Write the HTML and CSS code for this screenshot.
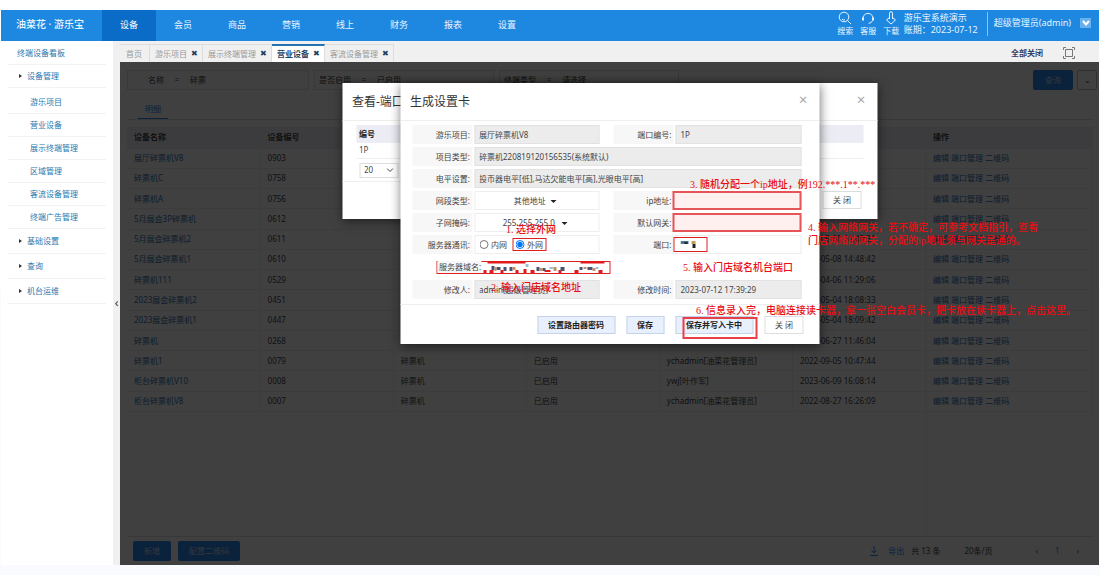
FILE: index.html
```html
<!DOCTYPE html>
<html lang="zh-CN">
<head>
<meta charset="utf-8">
<title>油菜花 · 游乐宝</title>
<link rel="stylesheet" href="styles.css">
</head>
<body>
<header class="topbar">
  <div class="logo">油菜花 · 游乐宝</div>
  <nav class="nav">
    <a class="nav-item active" href="#">设备</a><a class="nav-item" href="#">会员</a><a class="nav-item" href="#">商品</a><a class="nav-item" href="#">营销</a><a class="nav-item" href="#">线上</a><a class="nav-item" href="#">财务</a><a class="nav-item" href="#">报表</a><a class="nav-item" href="#">设置</a>
  </nav>
  <div class="tools">
    <a class="tool" href="#"><svg width="14" height="14" viewBox="0 0 14 14"><circle cx="6" cy="6" r="4.8"/><path d="M9.5 9.5l3.500 3.500M4 8.200a3 3 0 0 0 3 .6"/></svg>搜索</a>
    <a class="tool" href="#"><svg width="14" height="14" viewBox="0 0 14 14"><path d="M2 9a5.200 5.200 0 1 1 10 0M11.500 9.500q-1 3-4 2.800"/><path stroke-width="2" d="M2 6.500v3M12 6.500v3"/></svg>客服</a>
    <a class="tool" href="#"><svg width="14" height="14" viewBox="0 0 14 14"><path d="M5.500 8V2.200a1.500 1.500 0 0 1 3 0V8M5.500 6.500L2.500 9 7 13l4.500-4-3-2.500"/></svg>下载</a>
  </div>
  <div class="account"><span>游乐宝系统演示</span><span>账期：2023-07-12</span></div>
  <div class="user">超级管理员(admin)</div>
  <button class="user-menu" aria-label="用户菜单"><svg width="8" height="6" viewBox="0 0 8 6"><path d="M1 1l3 3.500L7 1"/></svg></button>
</header>
<div class="body">
  <aside class="sidebar">
    <a class="side-item top" href="#">终端设备看板</a>
    <a class="side-item parent" href="#">设备管理</a>
    <div class="side-sub">
      <a class="side-item" href="#">游乐项目</a>
      <a class="side-item" href="#">营业设备</a>
      <a class="side-item" href="#">展示终端管理</a>
      <a class="side-item" href="#">区域管理</a>
      <a class="side-item" href="#">客流设备管理</a>
      <a class="side-item" href="#">终端广告管理</a>
    </div>
    <a class="side-item parent group" href="#">基础设置</a>
    <a class="side-item parent group" href="#">查询</a>
    <a class="side-item parent group" href="#">机台运维</a>
  </aside>
  <button class="splitter" aria-label="收起侧栏">‹</button>
  <main class="main">
    <div class="tabs">
      <a class="tab" href="#">首页</a>
      <a class="tab" href="#">游乐项目<b>✖</b></a>
      <a class="tab" href="#">展示终端管理<b>✖</b></a>
      <a class="tab current" href="#">营业设备<b>✖</b></a>
      <a class="tab" href="#">客流设备管理<b>✖</b></a>
      <a class="close-all" href="#">全部关闭</a>
      <button class="full" aria-label="全屏"><svg width="12" height="12" viewBox="0 0 12 12"><path d="M2.500 2.500h7v7h-7zM.5 3V.5H3M9 .5h2.500V3M.5 9v2.500H3M9 11.500h2.500V9"/></svg></button>
    </div>
    <div class="content">
      <div class="filters">
        <div class="filter wide"><label for="f1">名称</label><i>=</i><input id="f1" value="碎票"></div>
        <div class="filter"><label for="f2">是否启用</label><i>=</i><select id="f2"><option>已启用</option></select></div>
        <div class="filter"><label for="f3">终端类型</label><i>=</i><select id="f3"><option>请选择</option></select></div>
        <button class="primary search">查询</button>
        <button class="more" aria-label="更多条件">⌄</button>
      </div>
      <div class="subtabs"><a href="#">明细</a></div>
      <div class="grid-area">
        <table class="devices">
          <thead><tr><th>设备名称</th><th>设备编号</th><th>设备类型</th><th>状态</th><th>修改人</th><th>修改时间</th><th class="ops">操作</th></tr></thead>
          <tbody>
            <tr><td><a href="#">展厅碎票机V8</a></td><td>0903</td><td></td><td></td><td></td><td></td><td><a href="#">编辑</a> <a href="#">端口管理</a> <a href="#">二维码</a></td></tr>
            <tr><td><a href="#">碎票机C</a></td><td>0758</td><td></td><td></td><td></td><td></td><td><a href="#">编辑</a> <a href="#">端口管理</a> <a href="#">二维码</a></td></tr>
            <tr><td><a href="#">碎票机A</a></td><td>0756</td><td></td><td></td><td></td><td></td><td><a href="#">编辑</a> <a href="#">端口管理</a> <a href="#">二维码</a></td></tr>
            <tr><td><a href="#">5月展会3P碎票机</a></td><td>0612</td><td></td><td></td><td></td><td></td><td><a href="#">编辑</a> <a href="#">端口管理</a> <a href="#">二维码</a></td></tr>
            <tr><td><a href="#">5月展会碎票机2</a></td><td>0611</td><td></td><td></td><td></td><td>2023-05-08 14:49:31</td><td><a href="#">编辑</a> <a href="#">端口管理</a> <a href="#">二维码</a></td></tr>
            <tr><td><a href="#">5月展会碎票机1</a></td><td>0610</td><td></td><td></td><td></td><td>2023-05-08 14:48:42</td><td><a href="#">编辑</a> <a href="#">端口管理</a> <a href="#">二维码</a></td></tr>
            <tr><td><a href="#">碎票机111</a></td><td>0529</td><td></td><td></td><td></td><td>2023-04-06 11:29:06</td><td><a href="#">编辑</a> <a href="#">端口管理</a> <a href="#">二维码</a></td></tr>
            <tr><td><a href="#">2023展会碎票机2</a></td><td>0451</td><td></td><td></td><td></td><td>2023-05-04 18:08:33</td><td><a href="#">编辑</a> <a href="#">端口管理</a> <a href="#">二维码</a></td></tr>
            <tr><td><a href="#">2023展会碎票机1</a></td><td>0447</td><td></td><td></td><td></td><td>2023-05-04 18:09:42</td><td><a href="#">编辑</a> <a href="#">端口管理</a> <a href="#">二维码</a></td></tr>
            <tr><td><a href="#">碎票机</a></td><td>0268</td><td></td><td></td><td></td><td>2022-06-27 11:46:04</td><td><a href="#">编辑</a> <a href="#">端口管理</a> <a href="#">二维码</a></td></tr>
            <tr><td><a href="#">碎票机1</a></td><td>0079</td><td>碎票机</td><td>已启用</td><td>ychadmin[油菜花管理员]</td><td>2022-09-05 10:47:44</td><td><a href="#">编辑</a> <a href="#">端口管理</a> <a href="#">二维码</a></td></tr>
            <tr><td><a href="#">柜台碎票机V10</a></td><td>0008</td><td>碎票机</td><td>已启用</td><td>ywj[叶作军]</td><td>2023-06-09 16:08:14</td><td><a href="#">编辑</a> <a href="#">端口管理</a> <a href="#">二维码</a></td></tr>
            <tr><td><a href="#">柜台碎票机V8</a></td><td>0007</td><td>碎票机</td><td>已启用</td><td>ychadmin[油菜花管理员]</td><td>2022-08-27 16:26:09</td><td><a href="#">编辑</a> <a href="#">端口管理</a> <a href="#">二维码</a></td></tr>
          </tbody>
        </table>
        <div class="ops-fill"></div>
      </div>
      <div class="footer">
        <button class="primary">新增</button>
        <button class="primary">配置二维码</button>
        <a class="export" href="#"><svg width="8" height="10" viewBox="0 0 8 10"><path d="M4 0v7M1.500 4.500L4 7l2.500-2.500M0 9.500h8"/></svg>导出</a>
        <span>共 13 条</span>
        <select class="page-size" aria-label="每页条数"><option>20条/页</option></select>
        <div class="pager"><a href="#">‹</a><a href="#" class="on">1</a><a href="#">›</a></div>
      </div>
      <div class="mask"></div>

      <section class="dialog ports">
        <div class="dialog-head"><h2>查看-端口</h2><button class="x" aria-label="关闭">×</button></div>
        <div class="ports-body">
          <table class="ports-table"><thead><tr><th>编号</th></tr></thead><tbody><tr><td>1P</td></tr></tbody></table>
          <div class="ports-page"><select aria-label="每页"><option>20</option></select><svg width="7" height="5" viewBox="0 0 7 5"><path d="M.5 .5l3 3 3-3"/></svg></div>
        </div>
        <div class="dialog-foot"><button class="plain">关 闭</button></div>
      </section>

      <section class="dialog card">
        <div class="dialog-head"><h2>生成设置卡</h2><button class="x" aria-label="关闭">×</button></div>
        <form class="form">
          <div class="field"><label for="c1">游乐项目:</label><input id="c1" readonly value="展厅碎票机V8"></div>
          <div class="field"><label for="c2">端口编号:</label><input id="c2" readonly value="1P"></div>
          <div class="field full-row"><label for="c3">项目类型:</label><input id="c3" readonly value="碎票机220819120156535(系统默认)"></div>
          <div class="field full-row"><label for="c4">电平设置:</label><input id="c4" readonly value="投币器电平[低],马达欠能电平[高],光眼电平[高]"></div>
          <div class="field"><label for="c5">网段类型:</label><span class="pick"><select id="c5"><option>其他地址</option></select></span></div>
          <div class="field"><label for="c6">ip地址:</label><input id="c6" class="marked"></div>
          <div class="field"><label for="c7">子网掩码:</label><span class="pick mask-pick"><select id="c7"><option>255.255.255.0</option></select></span></div>
          <div class="field"><label for="c8">默认网关:</label><input id="c8" class="marked"></div>
          <div class="field"><span class="label">服务器通讯:</span><div class="radios"><label><input type="radio" name="net">内网</label><label class="boxed"><input type="radio" name="net" checked>外网</label></div></div>
          <div class="field"><label for="c9">端口:</label><div class="port-cell"><div class="port-box"><input id="c9"><svg width="18" height="8" viewBox="0 0 18 8"><path fill="#487896" d="M0 1h8v3H0z"/><path fill="#222" d="M4 2h3v2H4zM12 4h3v4h-3z"/><path fill="#c49c55" d="M11 1h4v3h-4z"/></svg></div></div></div>
          <div class="domain full-row"><div class="domain-box"><label for="c10">服务器域名:</label><input id="c10"><svg viewBox="0 0 130 12" width="130" height="12"><path d="M5 1h38M10 0h28M98 1h24" stroke="#e31a1c" stroke-width="3"/><g fill="#e31a1c"><path d="M1 9h3v3H1zM7 9h4v3H7zM18 9h3v3h-3zM33 9h3v3h-3zM41 8h3v4h-3zM48 9h4v3h-4zM62 9h6v2h-6zM76 9h3v3h-3zM92 9h4v3h-4zM116 9h4v3h-4z"/></g><g fill="#47536f"><path d="M9 5h3v4H9zM14 6h4v3h-4zM21 6h3v4h-3zM27 6h3v4h-3zM54 6h3v4h-3zM60 7h3v3h-3zM78 6h4v4h-4zM97 6h3v3h-3zM105 6h5v3h-5z"/></g><g fill="#c59169"><path d="M12 6h2v4h-2zM30 6h3v3h-3zM57 7h3v3h-3zM71 6h3v4h-3zM101 6h3v2h-3zM110 7h3v3h-3z"/></g><path fill="#a0bfd0" d="M43 3h3v3h-3zM67 6h4v2h-4zM113 6h3v2h-3z"/></svg></div></div>
          <div class="field"><label for="c11">修改人:</label><input id="c11" readonly value="admin[超级管理员]"></div>
          <div class="field"><label for="c12">修改时间:</label><input id="c12" readonly value="2023-07-12 17:39:29"></div>
        </form>
        <div class="dialog-foot">
          <button class="soft">设置路由器密码</button><button class="soft">保存</button><button class="soft write"><span>保存并写入卡中</span></button><button class="plain">关 闭</button>
        </div>
        <p class="note n1">1. 选择外网</p>
        <p class="note n2">2. 输入门店域名地址</p>
        <p class="note n3">3. 随机分配一个ip地址，例192.***.1**.***</p>
        <p class="note n4">4. 输入网络网关，若不确定，可参考文档指引，查看<br>门店网络的网关，分配的ip地址须与网关是通的。</p>
        <p class="note n5">5. 输入门店域名机台端口</p>
        <p class="note n6">6. 信息录入完，电脑连接读卡器，拿一张空白会员卡，把卡放在读卡器上，点击这里。</p>
      </section>
    </div>
  </main>
</div>
</body>
</html>
```
FILE: styles.css
```css
* { box-sizing: border-box; }
body {
  margin: 0;
  padding: 10px 1px;
  min-height: 100vh;
  display: flex;
  flex-direction: column;
  overflow-x: hidden;
  background: #fff;
  background-image: linear-gradient(#fff 50%, #fafbfe 50%);
  font: 8px/12px "Noto Sans", "Noto Sans CJK SC", sans-serif;
  color: #444;
}
a { color: inherit; text-decoration: none; }
input, select, button { font: inherit; color: inherit; margin: 0; padding: 0; border: 0; background: none; border-radius: 0; min-width: 0; }
select { appearance: none; }
svg { fill: none; stroke: currentColor; }

.topbar { display: flex; height: 31px; background: #1e88e1; color: #e8f4ff; align-items: center; flex: none; }
.logo { width: 101px; padding: 0 0 3px 15px; font-size: 10px; font-weight: 500; white-space: nowrap; }
.nav { display: flex; flex: 1; height: 100%; font-size: 9px; }
.nav-item { width: 54px; display: flex; align-items: center; justify-content: center; padding-bottom: 2px; }
.nav-item.active { background: #0a6cc6; color: #fff; }
.tools { display: flex; gap: 6px; padding-right: 4px; }
.tool { display: flex; flex-direction: column; align-items: center; width: 17px; white-space: nowrap; margin-top: -4px; }
.account { display: flex; flex-direction: column; font-size: 9px; border-right: 1px solid #8cc4f2; width: 84px; white-space: nowrap; line-height: 12px; margin-top: -3px; }
.user { font-size: 9px; padding: 0 9px 5px 6px; white-space: nowrap; }
.user-menu { width: 11px; height: 10px; margin: 0 8px 5px 0; background: #68b0ee; display: flex; align-items: center; justify-content: center; color: #fff; stroke-width: 2; }

.body { display: flex; flex: 1; }
.sidebar { width: 112px; flex: none; padding: 1px 7px 0 6px; background: #fff; color: #2878b0; }
.side-item { display: flex; align-items: center; height: 23px; padding-left: 23px; border-bottom: 1px solid #f3f3f3; }
.side-item.top { padding-left: 10px; }
.side-item.parent { padding-left: 12px; gap: 5px; }
.side-item.parent::before { content: ""; border: solid transparent; border-width: 2px 0 2px 3px; border-left-color: #333; }
.side-sub { padding-top: 3px; }
.side-item.group { height: 25px; }
.splitter { width: 7px; flex: none; background: #f0f0f0; color: #333; font-size: 12px; }
.main { flex: 1; display: flex; flex-direction: column; min-width: 0; background: #f0f0f0; }

.tabs { display: flex; height: 21px; padding-top: 3px; color: #999; }
.tab { display: flex; align-items: center; gap: 4px; padding: 0 5px; border: 1px solid #ddd; border-width: 1px 1px 0 0; white-space: nowrap; }
.tab:first-child { padding: 0 7px 0 6px; }
.tab b { width: 6px; color: #1d3f5c; font: 8px/12px "DejaVu Sans", sans-serif; }
.tab.current { background: #fff; color: #263f60; font-weight: 700; border-top: 2px solid #2472ae; }
.close-all { margin-left: auto; align-self: center; font-weight: 700; color: #2d3e64; padding-right: 20px; }
.full { margin-right: 24px; width: 12px; display: flex; align-items: center; color: #777; }

.content { position: relative; flex: 1; display: flex; flex-direction: column; background: #fff; }
.mask { position: absolute; inset: 0; background: rgba(0, 0, 0, .75); }
.filters { display: flex; gap: 5px; padding: 8px 2px 0 7px; height: 28px; }
.filter { display: flex; align-items: center; width: 180px; border: 1px solid #e4e4e4; padding-left: 4px; }
.filter.wide { width: 182px; padding-left: 20px; }
.filter i { width: 26px; text-align: center; font-style: normal; }
.filter input, .filter select { flex: 1; }
.primary { height: 20px; padding: 0 11px; border-radius: 2px; background: #2a86f0; color: #c4d8f0; }
.search { margin-left: auto; width: 40px; }
.more { width: 20px; height: 20px; border: 1px solid #bbb; border-radius: 2px; margin-left: -1px; }
.subtabs { display: flex; margin: 8px 6px 7px 7px; border-bottom: 1px solid #ddd; height: 22px; }
.subtabs a { width: 30px; margin-left: 11px; padding-top: 5px; text-align: center; color: #2a86f0; border-bottom: 1px solid #2a86f0; }
.grid-area { flex: 1; display: flex; flex-direction: column; margin: 0 6px 0 7px; border-bottom: 1px solid #ddd; }
.devices { width: 100%; height: 285px; border-collapse: collapse; table-layout: fixed; }
.devices th, .devices td { text-align: left; padding: 0 0 0 7px; border: 1px solid #eee; border-width: 0 1px 1px 0; white-space: nowrap; line-height: 12px; }
.devices th { height: 21px; background: #eef0f6; font-weight: 700; }
.devices .ops { width: 167px; }
.devices td a { color: #3673b4; }
.ops-fill { flex: 1; width: 167px; align-self: flex-end; border-left: 1px solid #eee; }
.footer { display: flex; align-items: center; gap: 7px; height: 28px; padding: 0 20px 0 13px; }
.export { margin-left: auto; display: flex; gap: 10px; color: #2a86f0; align-items: center; }
.page-size { width: 76px; padding-left: 17px; }
.pager { display: flex; gap: 17px; padding-left: 5px; }
.pager .on { color: #2a86f0; }

.dialog { position: absolute; top: 21px; left: 50%; transform: translateX(-50%); background: #fff; display: flex; flex-direction: column; box-shadow: 0 2px 10px rgba(0, 0, 0, .55); }
.dialog-head { display: flex; align-items: center; justify-content: space-between; height: 38px; padding: 0 10px; border-bottom: 1px solid #eee; }
.dialog h2 { margin: 0; font-size: 12px; line-height: 18px; font-weight: 400; color: #333; }
.x { font-size: 15px; width: 12px; color: #aaa; line-height: 12px; padding-bottom: 5px; }
.dialog-foot { display: flex; justify-content: flex-end; gap: 11px; padding: 11px 16px 10px; border-top: 1px solid #eee; }
.dialog-foot button { height: 18px; padding: 0 10px; white-space: nowrap; }
.plain { border: 1px solid #ddd; background: #fff; }
.soft { border: 1px solid #c5d3ea; background: #e8f0fe; color: #222; font-weight: 700; }
.dialog-foot .plain { width: 39px; }
.ports { width: 535px; }
.ports-body { padding: 4px 14px 3px; }
.ports-table { width: 100%; border-collapse: collapse; }
.ports-table th { height: 18px; background: #ececf4; text-align: left; padding: 0 3px; color: #222; }
.ports-table td { height: 15px; border-bottom: 1px solid #eee; padding: 0 3px; }
.ports-page { position: relative; width: 39px; margin: 4px 0 0 3px; }
.ports-page select { width: 100%; height: 15px; border: 1px solid #ddd; padding-left: 4px; display: block; }
.ports-page svg { position: absolute; right: 5px; top: 5px; }
.ports .dialog-foot { padding-top: 9px; }

.card { width: 419px; }
.form { display: grid; grid-template-columns: minmax(0, 1fr) minmax(0, 1fr); gap: 3px 14px; padding: 4px 18px 5px 12px; }
.full-row { grid-column: 1 / -1; }
.field { display: flex; gap: 2px; height: 19px; }
.field > label, .field > .label { width: 60px; flex: none; background: #f7f7f7; text-align: right; line-height: 19px; padding-right: 2px; white-space: nowrap; }
.field > input { flex: 1; padding: 0 4px; background: #ececec; border: 1px solid #e2e2e2; }
.field > .marked { background: #fff0f0; border: 2px solid #e65458; margin-left: -3px; }
.pick { flex: 1; position: relative; display: flex; border: 1px solid #eee; }
.pick select { flex: 1; text-align-last: center; padding-right: 14px; }
.pick::after { content: ""; position: absolute; left: 75px; top: 8px; border: solid transparent; border-width: 3px 3px 0; border-top-color: #222; }
.mask-pick select { padding-right: 16px; }
.mask-pick::after { left: 86px; }
.radios { flex: 1; display: flex; align-items: center; gap: 5px; padding-left: 4px; border: 1px solid #eee; }
.radios label { display: flex; align-items: center; gap: 3px; height: 13px; }
.radios input { width: 9px; height: 9px; }
.radios .boxed { border: 1px solid #e02020; padding: 0 2px; }
.port-cell { flex: 1; border: 1px solid #eee; display: flex; align-items: center; margin-left: -3px; }
.port-box { display: flex; align-items: center; width: 34px; height: 15px; border: 1px solid #e02020; position: relative; }
.port-box input { width: 100%; height: 100%; }
.port-box svg { position: absolute; left: 6px; top: 2px; stroke: none; }
.domain { display: flex; align-items: center; height: 20px; padding-left: 24px; }
.domain-box { display: flex; align-items: center; position: relative; width: 174px; height: 13px; border: 1px solid #e02020; }
.domain-box label { background: #f7f7f7; padding-left: 2px; white-space: nowrap; }
.domain-box input { flex: 1; }
.domain-box svg { position: absolute; left: 45px; top: -1px; stroke: none; }
.dialog-foot .write { position: relative; width: 78px; padding: 0 9px; }
.write::after { content: ""; position: absolute; left: 6px; top: 0; width: 71px; height: 18px; border: 2px solid #e64048; }
.note { position: absolute; margin: 0; color: #e80d12; font: 500 10px/13px "Liberation Serif", "Noto Sans CJK SC", serif; white-space: nowrap; }
.n1 { left: 106px; top: 140px; }
.n2 { left: 91px; top: 198px; }
.n3 { left: 290px; top: 95px; }
.n4 { left: 408px; top: 138px; }
.n5 { left: 283px; top: 178px; }
.n6 { left: 296px; top: 221px; }
```
